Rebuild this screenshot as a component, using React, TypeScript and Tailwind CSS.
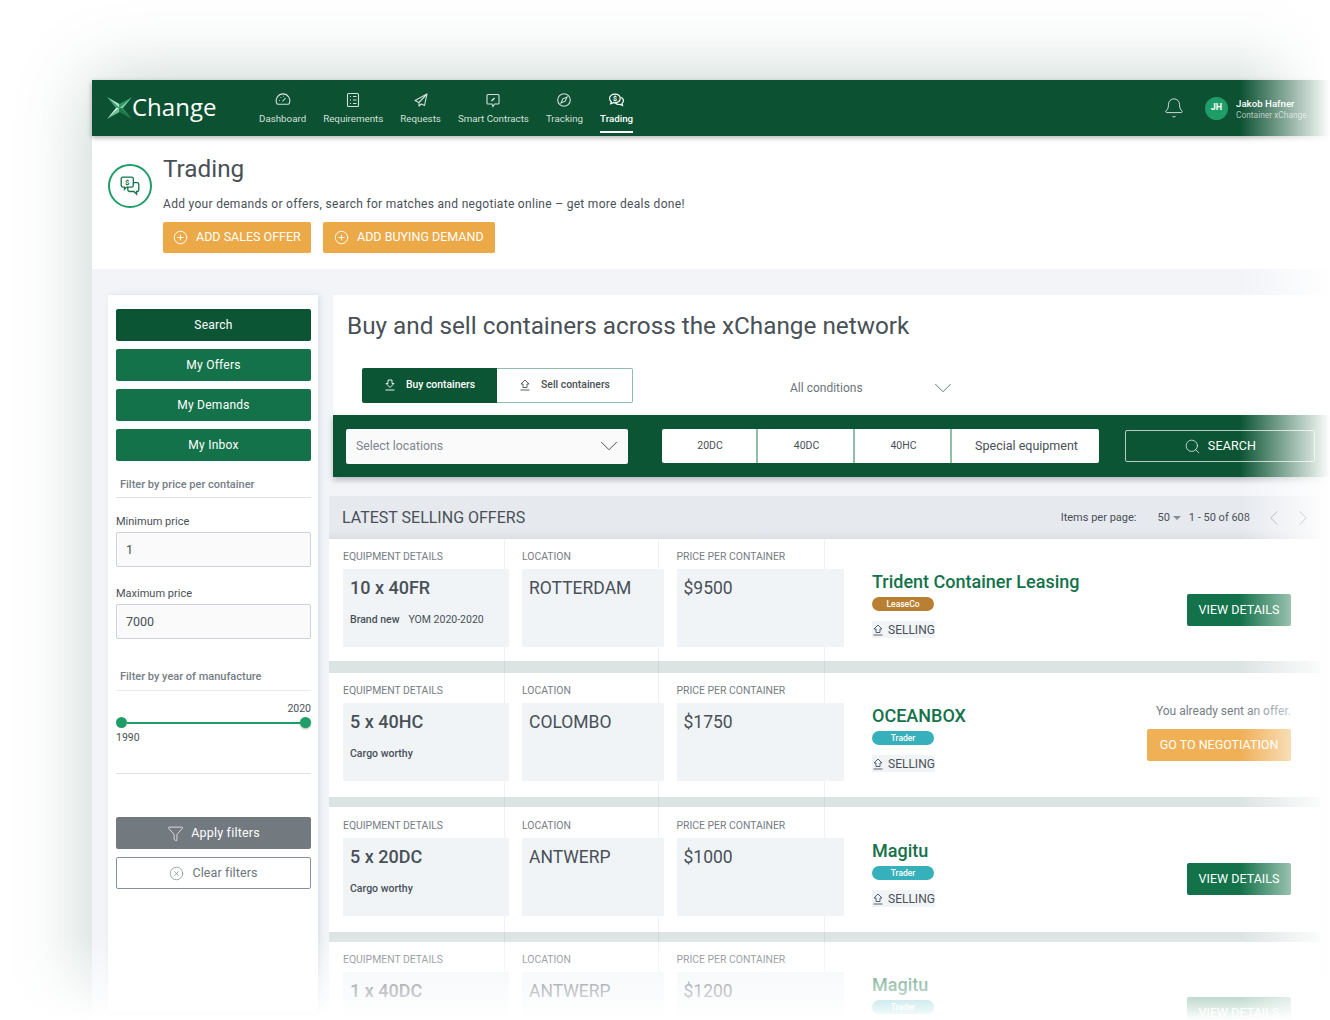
import { Bell, ChevronDown, ChevronLeft, ChevronRight, CircleX, Filter, PlusCircle, Search } from "lucide-react";
import type { JSX } from "react";

function XMark() {
  return (
    <svg width="25" height="22" viewBox="0 0 25 22" className="shrink-0">
      <polygon points="0,0 12.500,7 12.500,11" fill="#a7e0c2" />
      <polygon points="0,0 9,11 12.500,11" fill="#3fa877" />
      <polygon points="25,0 12.500,7 12.500,11" fill="#2f9a68" />
      <polygon points="25,0 16,11 12.500,11" fill="#7ccfa4" />
      <polygon points="0,22 9,11 12.500,11" fill="#d3f0e0" />
      <polygon points="0,22 12.500,15 12.500,11" fill="#6cc597" />
      <polygon points="25,22 16,11 12.500,11" fill="#2b8a5f" />
      <polygon points="25,22 12.500,15 12.500,11" fill="#1f7a50" />
    </svg>
  );
}

function GaugeIcon() {
  return (
    <svg width="16" height="16" viewBox="0 0 16 16" fill="none" stroke="currentColor" strokeWidth="1.100">
      <path d="M1.800 11.500a6.800 6.800 0 1 1 12.400 0c-.2.5-.6.8-1.100.8H2.900c-.5 0-.9-.3-1.100-.8z" />
      <path d="M7.500 9.500l3-3.500M4 8.500h.8M5.500 5.500h.8M8 4.200h.8" />
    </svg>
  );
}

function ListIcon() {
  return (
    <svg width="16" height="16" viewBox="0 0 16 16" fill="none" stroke="currentColor" strokeWidth="1.100">
      <rect x="2.500" y="1.500" width="11" height="13" rx="1" />
      <path d="M5 4.500h1M8 4.500h3.500M5 8h1M8 8h3.500M5 11.500h1M8 11.500h3.500" />
    </svg>
  );
}

function PlaneIcon() {
  return (
    <svg width="16" height="16" viewBox="0 0 16 16" fill="none" stroke="currentColor" strokeWidth="1.100" strokeLinejoin="round">
      <path d="M14 2L2 8.500l4 2V14l2.500-2 3 1.500z" />
      <path d="M14 2L6 10.500" />
    </svg>
  );
}

function ContractIcon() {
  return (
    <svg width="16" height="16" viewBox="0 0 16 16" fill="none" stroke="currentColor" strokeWidth="1.100">
      <path d="M3 2.500h10a1 1 0 0 1 1 1v7.500a1 1 0 0 1-1 1H9.500L8 14.500 7 12H3a1 1 0 0 1-1-1V3.500a1 1 0 0 1 1-1z" />
      <path d="M6.500 9l3-3" strokeWidth="1.600" />
    </svg>
  );
}

function CompassIcon() {
  return (
    <svg width="16" height="16" viewBox="0 0 16 16" fill="none" stroke="currentColor" strokeWidth="1.100">
      <circle cx="8" cy="8" r="6.300" />
      <path d="M11 5L9.200 9.200 5 11l1.800-4.200z" />
    </svg>
  );
}

function NavChatsIcon() {
  return (
    <svg width="17" height="15" viewBox="0 0 16 14" fill="none" stroke="currentColor" strokeWidth="1.100">
      <path d="M6.500 1C3.500 1 1.500 2.800 1.500 5c0 1.200.6 2.300 1.600 3l-.6 2 2.500-1c.5.1 1 .2 1.500.2 3 0 5-1.800 5-4.200S9.500 1 6.500 1z" />
      <path d="M12 4c1.500.5 2.500 1.800 2.500 3.200 0 1-.5 1.900-1.300 2.500l.5 2-2.300-1c-1.800.3-3.500-.3-4.400-1.500" />
      <text x="6.500" y="7.300" fontSize="6.500" fontWeight="700" textAnchor="middle" fill="currentColor" stroke="none" fontFamily="Roboto, sans-serif">$</text>
    </svg>
  );
}

function ChatsIcon({ size = 16 }: { size?: number }) {
  return (
    <svg width={size} height={size} viewBox="0 0 20 20" fill="none" stroke="currentColor" strokeWidth="1.200">
      <path d="M2 3.500C2 2.700 2.700 2 3.500 2h8c.8 0 1.500.7 1.500 1.500v6c0 .8-.7 1.500-1.500 1.500H7l-2 2v-2H3.500C2.700 11 2 10.300 2 9.500z" />
      <path d="M13 7h3.500c.8 0 1.500.7 1.500 1.500v5c0 .8-.7 1.500-1.500 1.500H16v2.500L13.500 15H9.500C8.700 15 8 14.300 8 13.500V11" />
      <text x="7.500" y="9.500" fontSize="7" fontWeight="700" textAnchor="middle" fill="currentColor" stroke="none" fontFamily="Roboto, sans-serif">$</text>
    </svg>
  );
}

function UpArrow({ down = false }: { down?: boolean }) {
  return (
    <svg width="12" height="12" viewBox="0 0 12 12" fill="none" stroke="currentColor" strokeWidth="0.900" className="shrink-0">
      {down ? (
        <path d="M4 1h4v3.500h2L6 8.500 2 4.500h2z" />
      ) : (
        <path d="M6 1l4 4H8v3.500H4V5H2z" />
      )}
      <path d="M1.500 11h9" />
    </svg>
  );
}

const navItems: { label: string; icon: JSX.Element; active?: boolean }[] = [
  { label: "Dashboard", icon: <GaugeIcon /> },
  { label: "Requirements", icon: <ListIcon /> },
  { label: "Requests", icon: <PlaneIcon /> },
  { label: "Smart Contracts", icon: <ContractIcon /> },
  { label: "Tracking", icon: <CompassIcon /> },
  { label: "Trading", icon: <NavChatsIcon />, active: true },
];

function Header() {
  return (
    <header className="relative z-10 flex h-[56px] shrink-0 items-center bg-[#0c5132] pl-[15px] shadow-[0_2px_5px_rgba(0,0,0,0.3)]">
      <div className="flex w-[152px] shrink-0 items-center">
        <XMark />
        <span className="mb-[3px] font-['Open_Sans',sans-serif] text-[24px] leading-none text-white">Change</span>
      </div>
      <nav className="mt-[9px] flex gap-[17px]">
        {navItems.map((item) => (
          <div
            key={item.label}
            className={
              item.active
                ? "flex h-[41px] flex-col items-center border-b-2 border-white text-white"
                : "flex h-[41px] flex-col items-center border-b-2 border-transparent text-[#d3e0d9]"
            }
          >
            <div className="flex h-[16px] items-center">{item.icon}</div>
            <span className={item.active ? "mt-[4px] text-[9.750px] font-medium leading-[14px]" : "mt-[4px] text-[9.750px] leading-[14px]"}>
              {item.label}
            </span>
          </div>
        ))}
      </nav>
      <div className="ml-auto flex items-center">
        <Bell size={22} strokeWidth={1} className="mr-[20px] text-[#dbe6e0]" />
        <div className="flex h-[23px] w-[23px] items-center justify-center rounded-full bg-[#1f9d68] text-[9px] font-bold text-white">JH</div>
        <div className="ml-[8px] w-[94px]">
          <div className="text-[9.700px] font-medium leading-[13px] text-white">Jakob Hafner</div>
          <div className="text-[8.400px] leading-[10px] text-[#a9bfb3]">Container xChange</div>
        </div>
      </div>
    </header>
  );
}

function OrangeButton({ label, className }: { label: string; className: string }) {
  return (
    <button className={`flex h-[31px] items-center rounded-[2px] bg-[#eca947] text-[12.500px] text-white ${className}`}>
      <PlusCircle size={15} strokeWidth={1.500} className="mr-[8px]" />
      {label}
    </button>
  );
}

function TitleBand() {
  return (
    <section className="flex h-[133px] shrink-0 bg-white pl-[16px]">
      <div className="mt-[28px] flex h-[44px] w-[44px] items-center justify-center rounded-full border-2 border-[#1f9d68] text-[#14724a]">
        <ChatsIcon size={22} />
      </div>
      <div className="ml-[11px]">
        <h1 className="mt-[17px] text-[24.300px] leading-[32px] text-[#495057]">Trading</h1>
        <p className="mt-[10px] text-[12px] leading-[18px] tracking-[0.3px] text-[#495057]">
          Add your demands or offers, search for matches and negotiate online – get more deals done!
        </p>
        <div className="mt-[9px] flex gap-[12px]">
          <OrangeButton label="ADD SALES OFFER" className="w-[148px] pl-[10px]" />
          <OrangeButton label="ADD BUYING DEMAND" className="w-[172px] pl-[11px]" />
        </div>
      </div>
    </section>
  );
}

function GreenButton({ label, dark = false }: { label: string; dark?: boolean }) {
  return (
    <button className={dark ? "h-[32px] w-full rounded-[2px] bg-[#0c5534] text-[12px] tracking-[0.25px] text-white" : "h-[32px] w-full rounded-[2px] bg-[#14724a] text-[12px] tracking-[0.25px] text-white"}>
      {label}
    </button>
  );
}

function PriceField({ label, value }: { label: string; value: string }) {
  return (
    <div>
      <div className="text-[11px] leading-[14px] text-[#495057]">{label}</div>
      <div className="mt-[3px] flex h-[35px] items-center rounded-[2px] border border-[#ced4da] bg-[#fafafa] px-[9px] pt-[2px] text-[12.500px] text-[#495057]">
        {value}
      </div>
    </div>
  );
}

function Sidebar() {
  return (
    <aside className="mb-[10px] ml-[16px] flex h-[716px] w-[210px] shrink-0 flex-col bg-white pl-[8px] pr-[7px] pt-[14px] shadow-[2px_0_6px_rgba(60,80,80,0.12)]">
      <div className="flex flex-col gap-[8px]">
        <GreenButton label="Search" dark />
        <GreenButton label="My Offers" />
        <GreenButton label="My Demands" />
        <GreenButton label="My Inbox" />
      </div>
      <div className="mt-[17px] border-b border-[#dee2e6] pb-[5px] pl-[4px] text-[11px] font-medium leading-[14px] text-[#757d85]">
        Filter by price per container
      </div>
      <div className="mt-[17px]">
        <PriceField label="Minimum price" value="1" />
      </div>
      <div className="mt-[20px]">
        <PriceField label="Maximum price" value="7000" />
      </div>
      <div className="mt-[31px] border-b border-[#e9ecef] pb-[6px] pl-[4px] text-[11px] font-medium leading-[14px] text-[#757d85]">
        Filter by year of manufacture
      </div>
      <div className="mb-px mt-[11px] text-right text-[10.500px] leading-[14px] text-[#495057]">2020</div>
      <div className="flex items-center">
        <span className="h-[11px] w-[11px] rounded-full bg-[#1f9d68]" />
        <span className="h-[2px] flex-1 bg-[#1f9d68]" />
        <span className="h-[11px] w-[11px] rounded-full bg-[#1f9d68] shadow-[0_1px_2px_rgba(0,0,0,0.3)]" />
      </div>
      <div className="mt-[3px] text-[10.500px] leading-[14px] text-[#495057]">1990</div>
      <div className="mt-[28px] border-b border-[#dee2e6]" />
      <button className="mt-[43px] flex h-[32px] w-full items-center justify-center rounded-[2px] bg-[#727a80] text-[12.500px] tracking-[0.2px] text-white">
        <Filter size={17} strokeWidth={1} className="mr-[7px]" />
        Apply filters
      </button>
      <button className="mt-[8px] flex h-[32px] w-full items-center justify-center rounded-[2px] border border-[#8a9199] bg-white text-[12.500px] tracking-[0.1px] text-[#6c757d]">
        <CircleX size={15} strokeWidth={1} className="mr-[8px]" />
        Clear filters
      </button>
    </aside>
  );
}

function SearchPanel() {
  return (
    <>
      <section className="ml-[4px] h-[120px] bg-white pl-[14px]">
        <h2 className="pt-[15px] text-[24.300px] leading-[32px] text-[#495057]">Buy and sell containers across the xChange network</h2>
        <div className="ml-[15px] mt-[25px] flex items-center">
          <div className="flex h-[35px] w-[135px] items-center justify-center rounded-l-[2px] bg-[#0c5534] text-[10.400px] font-medium text-white">
            <UpArrow down />
            <span className="ml-[10px]">Buy containers</span>
          </div>
          <div className="flex h-[35px] w-[136px] items-center justify-center rounded-r-[2px] border border-l-0 border-[#8fbfa8] bg-white text-[10.400px] font-medium text-[#495057]">
            <UpArrow />
            <span className="ml-[10px]">Sell containers</span>
          </div>
          <div className="ml-[157px] flex w-[168px] items-center pt-[6px] text-[12px] text-[#6c757d]">
            All conditions
            <ChevronDown size={30} strokeWidth={0.800} className="ml-auto" />
          </div>
        </div>
      </section>
      <section className="relative z-10 ml-[4px] flex h-[62px] items-center bg-[#0c5534] pl-[13px] shadow-[0_3px_6px_rgba(0,0,0,0.25)]">
        <div className="flex h-[35px] w-[282px] items-center justify-between rounded-[2px] bg-[#fafafa] pl-[10px] pr-[4px] text-[12.300px] text-[#7d858d]">
          Select locations
          <ChevronDown size={30} strokeWidth={0.800} className="text-[#495057]" />
        </div>
        <div className="ml-[34px] flex h-[34px] w-[437px] rounded-[2px] bg-white text-[#495057]">
          <span className="flex w-[96px] items-center justify-center border-r-2 border-[#8fbfa8] pl-[2px] text-[10.500px]">20DC</span>
          <span className="flex w-[97px] items-center justify-center border-r-2 border-[#8fbfa8] pl-[2px] text-[10.500px]">40DC</span>
          <span className="flex w-[97px] items-center justify-center border-r-2 border-[#8fbfa8] pl-[2px] text-[10.500px]">40HC</span>
          <span className="flex flex-1 items-center justify-center pl-[2px] text-[12.500px]">Special equipment</span>
        </div>
        <div className="ml-[26px] flex h-[32px] w-[190px] items-center justify-center rounded-[2px] border border-white/70 text-[12.500px] tracking-[0.15px] text-white">
          <Search size={17} strokeWidth={1} className="mr-[7px]" />
          SEARCH
        </div>
      </section>
    </>
  );
}

interface Offer {
  qty: string;
  note?: string;
  yom?: string;
  location: string;
  price: string;
  company: string;
  badge: string;
  sent?: boolean;
  partial?: boolean;
  rowClass: string;
}

const offers: Offer[] = [
  { qty: "10 x 40FR", note: "Brand new", yom: "YOM 2020-2020", location: "ROTTERDAM", price: "$9500", company: "Trident Container Leasing", badge: "LeaseCo", rowClass: "flex h-[122px] pl-[14px] pr-[29px]" },
  { qty: "5 x 40HC", note: "Cargo worthy", location: "COLOMBO", price: "$1750", company: "OCEANBOX", badge: "Trader", sent: true, rowClass: "flex h-[124px] pl-[14px] pr-[29px]" },
  { qty: "5 x 20DC", note: "Cargo worthy", location: "ANTWERP", price: "$1000", company: "Magitu", badge: "Trader", rowClass: "flex h-[125px] pl-[14px] pr-[29px] pt-px" },
  { qty: "1 x 40DC", location: "ANTWERP", price: "$1200", company: "Magitu", badge: "Trader", partial: true, rowClass: "flex h-[125px] pl-[14px] pr-[29px]" },
];

function Column({ label, widthClass, children }: { label: string; widthClass: string; children: React.ReactNode }) {
  return (
    <div className={`relative z-10 shrink-0 pt-[11px] ${widthClass}`}>
      <div className="text-[10.400px] leading-[14px] text-[#757d85]">{label}</div>
      <div className="mt-[5px] h-[78px] bg-[#f0f4f7] px-[7px] pt-[7px]">{children}</div>
    </div>
  );
}

function OfferRow({ offer }: { offer: Offer }) {
  return (
    <div className={offer.rowClass}>
      <Column label="EQUIPMENT DETAILS" widthClass="w-[166px]">
        <div className="text-[18px] font-medium leading-[24px] text-[#495057]">{offer.qty}</div>
        <div className="mt-[13px] flex gap-[9px] text-[10.500px] leading-[14px]">
          <span className="font-medium text-[#495057]">{offer.note}</span>
          {offer.yom && <span className="text-[#495057]">{offer.yom}</span>}
        </div>
      </Column>
      <Column label="LOCATION" widthClass="ml-[13px] w-[142px]">
        <div className="text-[17.500px] leading-[24px] text-[#495057]">{offer.location}</div>
      </Column>
      <Column label="PRICE PER CONTAINER" widthClass="ml-[12.500px] w-[167px]">
        <div className="text-[17.500px] leading-[24px] text-[#495057]">{offer.price}</div>
      </Column>
      <div className="ml-[28.500px] pt-[33px]">
        <div className="text-[18px] font-medium leading-[20px] text-[#14724a]">{offer.company}</div>
        <div className={offer.badge === "LeaseCo" ? "mt-[5px] flex h-[14px] w-[62px] items-center justify-center rounded-full bg-[#b98033] text-[8.500px] font-medium text-white" : "mt-[5px] flex h-[14px] w-[62px] items-center justify-center rounded-full bg-[#36b0ba] text-[8.500px] font-medium text-white"}>
          {offer.badge}
        </div>
        {!offer.partial && (
          <div className="mt-[10px] flex h-[17px] w-[63px] items-center bg-[#f1f4f7] text-[12px] text-[#495057]">
            <UpArrow />
            <span className="ml-[4px]">SELLING</span>
          </div>
        )}
      </div>
      <div className="ml-auto flex flex-col items-end">
        {offer.sent ? (
          <>
            <div className="mt-[30px] text-[12px] leading-[16px] text-[#757d85]">You already sent an offer.</div>
            <button className="mt-[10px] h-[32px] w-[144px] rounded-[2px] bg-[#f0b056] text-[12.500px] text-white">GO TO NEGOTIATION</button>
          </>
        ) : (
          <button className="mt-[55px] h-[32px] w-[104px] rounded-[2px] bg-[#14724a] text-[12.500px] text-white">VIEW DETAILS</button>
        )}
      </div>
    </div>
  );
}

function OfferList() {
  return (
    <section className="relative mr-[10px] mt-[19px] bg-white">
      <div className="flex h-[43px] items-center bg-gradient-to-b from-[#e6e9ee] from-80% to-[#dcdfe4] pl-[13px] pr-[4px]">
        <h3 className="text-[16px] text-[#495057]">LATEST SELLING OFFERS</h3>
        <div className="ml-auto flex items-center pt-px text-[11px] text-[#495057]">
          <span>Items per page:</span>
          <span className="ml-[21px]">50</span>
          <span className="ml-[3px] mr-[8px] h-0 w-0 border-x-[4px] border-t-[4px] border-x-transparent border-t-[#868e96]" />
          <span>1 - 50 of 608</span>
          <ChevronLeft size={26} strokeWidth={0.800} className="ml-[11px] text-[#868e96]" />
          <ChevronRight size={26} strokeWidth={0.800} className="ml-[3px] text-[#495057]" />
        </div>
      </div>
      {/* faint column rules */}
      <span className="absolute bottom-0 left-[175px] top-[43px] w-px bg-[#6c757d]/10" />
      <span className="absolute bottom-0 left-[329px] top-[43px] w-px bg-[#6c757d]/10" />
      <span className="absolute bottom-0 left-[495px] top-[43px] w-px bg-[#6c757d]/10" />
      {offers.map((offer, i) => (
        <div key={i}>
          <OfferRow offer={offer} />
          {i === 0 && <div className="h-[12px] bg-[#dce4e3]" />}
          {(i === 1 || i === 2) && <div className="h-[10px] bg-[#dce4e3]" />}
        </div>
      ))}
    </section>
  );
}

export default function App() {
  return (
    <div className="relative h-[1020px] overflow-hidden bg-white pl-[92px] pt-[80px] font-['Roboto',sans-serif]">
      <div className="flex h-[1100px] w-[1238px] flex-col bg-[#f2f4f8] shadow-[0_0_70px_rgba(40,90,75,0.28)]">
        <Header />
        <TitleBand />
        <div className="flex pt-[26px]">
          <Sidebar />
          <main className="ml-[11px] min-w-0 flex-1">
            <SearchPanel />
            <OfferList />
          </main>
        </div>
      </div>
      {/* screenshot fades out to the right and bottom */}
      <div className="pointer-events-none absolute bottom-0 right-0 top-0 z-20 w-[90px] bg-gradient-to-r from-white/0 to-white" />
      <div className="pointer-events-none absolute bottom-0 left-0 right-0 z-20 h-[85px] bg-gradient-to-b from-white/0 to-white" />
    </div>
  );
}
